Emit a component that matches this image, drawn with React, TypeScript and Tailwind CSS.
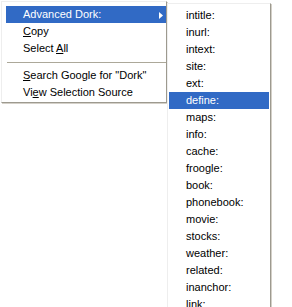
import React from "react";

const font = { fontFamily: '"Liberation Sans", Arial, sans-serif' };

function Item({ children, active, arrow }: { children: React.ReactNode; active?: boolean; arrow?: boolean }) {
  return (
    <div
      className={`relative flex h-[17px] items-center pl-[17px] text-[11px] leading-none ${
        active ? "bg-[#316ac5] text-white" : "text-black"
      }`}
    >
      <span>{children}</span>
      {arrow && (
        <svg className="absolute right-[3px] top-[6px]" width="4" height="7" viewBox="0 0 4 7">
          <path d="M0 0 L4 3.5 L0 7 Z" fill={active ? "#ffffff" : "#000000"} />
        </svg>
      )}
    </div>
  );
}

const U = ({ children }: { children: React.ReactNode }) => (
  <span className="underline underline-offset-[1px]">{children}</span>
);

export default function App() {
  const sub = [
    "intitle:",
    "inurl:",
    "intext:",
    "site:",
    "ext:",
    "define:",
    "maps:",
    "info:",
    "cache:",
    "froogle:",
    "book:",
    "phonebook:",
    "movie:",
    "stocks:",
    "weather:",
    "related:",
    "inanchor:",
    "link:",
    "allintitle:",
  ];
  return (
    <div className="relative h-[307px] w-[292px] overflow-hidden bg-white" style={font}>
      {/* main context menu */}
      <div className="absolute left-[1px] top-[1px] w-[166px] border border-t-[#eeeeee] border-l-[#eeeeee] border-r-[#9d9a8f] border-b-[#9d9a8f] bg-white pl-[4px] pt-[4px] pb-[1px] shadow-[1px_1px_0_#d4d0c8]">
        <Item active arrow>
          Advanced Dork:
        </Item>
        <Item>
          <U>C</U>opy
        </Item>
        <Item>
          Select <U>A</U>ll
        </Item>
        <div className="flex h-[10px] items-center pl-[1px]">
          <div className="h-px w-full bg-[#aca899]" />
        </div>
        <Item>
          <U>S</U>earch Google for "Dork"
        </Item>
        <Item>
          Vi<U>e</U>w Selection Source
        </Item>
      </div>

      {/* submenu */}
      <div className="absolute left-[167px] top-[3px] w-[104px] border border-t-[#eeeeee] border-l-[#eeeeee] border-r-[#9d9a8f] border-b-[#9d9a8f] bg-white px-[1px] pt-[3px] pb-[3px] shadow-[1px_1px_0_#d4d0c8]">
        {sub.map((s) => (
          <Item key={s} active={s === "define:"}>
            {s}
          </Item>
        ))}
      </div>
    </div>
  );
}
